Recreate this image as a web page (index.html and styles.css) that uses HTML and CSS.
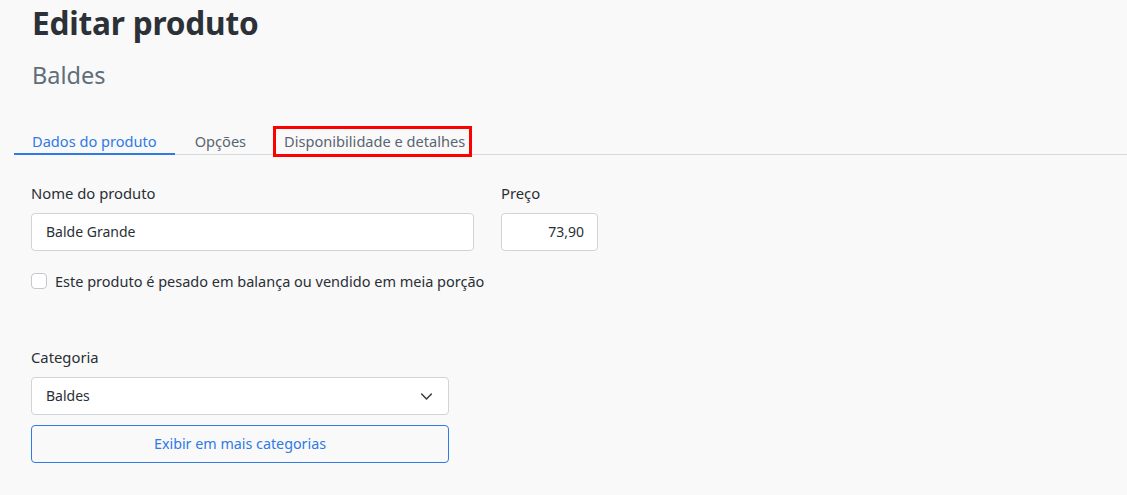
FILE: index.html
```html
<!DOCTYPE html>
<html lang="pt">
<head>
<meta charset="utf-8">
<link rel="stylesheet" href="styles.css">
</head>
<body>
<div class="page">
  <header class="head">
    <h1 class="title">Editar produto</h1>
    <h2 class="subtitle">Baldes</h2>
  </header>
  <nav class="tabs">
    <a class="tab active">Dados do produto</a>
    <a class="tab">Opções</a>
    <a class="tab marked">Disponibilidade e detalhes</a>
  </nav>
  <form class="form">
    <div class="row">
      <div class="field name">
        <label class="label">Nome do produto</label>
        <div class="input">Balde Grande</div>
      </div>
      <div class="field price">
        <label class="label">Preço</label>
        <div class="input right">73,90</div>
      </div>
    </div>
    <label class="check"><span class="box"></span>Este produto é pesado em balança ou vendido em meia porção</label>
    <div class="field cat">
      <label class="label">Categoria</label>
      <div class="input select">Baldes
        <svg class="chev" width="13" height="13" viewBox="0 0 16 16"><path d="M2 5l6 6 6-6" fill="none" stroke="#343a40" stroke-width="1.8" stroke-linecap="round" stroke-linejoin="round"/></svg>
      </div>
      <div class="btn">Exibir em mais categorias</div>
    </div>
  </form>
</div>
</body>
</html>
```
FILE: styles.css
```css
html, body { margin: 0; padding: 0; background: #f9f9fa; }
body { font-family: "Noto Sans", "Open Sans", sans-serif; color: #212529; }
.page { padding: 0 0 0 14px; }
.head { padding-left: 18px; }
.title { margin: 0; padding-top: 2px; font-size: 31.6px; font-weight: 700; color: #2c3137; line-height: 42px; letter-spacing: -0.2px; }
.subtitle { margin: 16px 0 0; font-size: 23.5px; font-weight: 400; color: #5f6e78; line-height: 30px; }
.tabs { margin-top: 30px; display: flex; border-bottom: 1px solid #d6d9dc; height: 34px; align-items: flex-end; }
.tab { padding: 7px 18px 0; font-size: 14.6px; color: #5a6570; line-height: 20px; height: 30px; box-sizing: border-box; }
.tab + .tab { margin-left: 2px; }
.tab.active { color: #2f7ae5; border-bottom: 2px solid #2f7ae5; margin-bottom: -1px; height: 31px; }
.marked { position: relative; }
.marked::after { content: ""; position: absolute; left: 7px; right: 11px; top: 2px; bottom: -3px; border: 3px solid #f00; }
.form { padding: 28px 0 0 17px; width: 567px; }
.row { display: flex; gap: 27px; }
.field { display: flex; flex-direction: column; }
.name { width: 443px; }
.price { width: 97px; }
.label { font-size: 14.8px; color: #2a2f34; line-height: 20px; margin-bottom: 10px; }
.input { height: 38px; box-sizing: border-box; border: 1px solid #ced4da; border-radius: 4px; background: #fff; font-size: 14px; line-height: 36px; padding: 0 14px; color: #2a2f34; }
.right { text-align: right; padding-right: 13px; }
.check { display: flex; align-items: center; gap: 8px; margin-top: 20px; font-size: 14.5px; color: #2a2f34; line-height: 20px; }
.box { width: 14px; height: 14px; border: 1px solid #c3c8cd; border-radius: 4px; background: #fff; }
.cat { margin-top: 56px; width: 418px; }
.select { display: flex; justify-content: space-between; align-items: center; padding-right: 15px; }
.btn { margin-top: 10px; height: 38px; box-sizing: border-box; border: 1px solid #2f7ae5; border-radius: 4px; text-align: center; line-height: 36px; font-size: 14.3px; color: #2f7ae5; }
```
